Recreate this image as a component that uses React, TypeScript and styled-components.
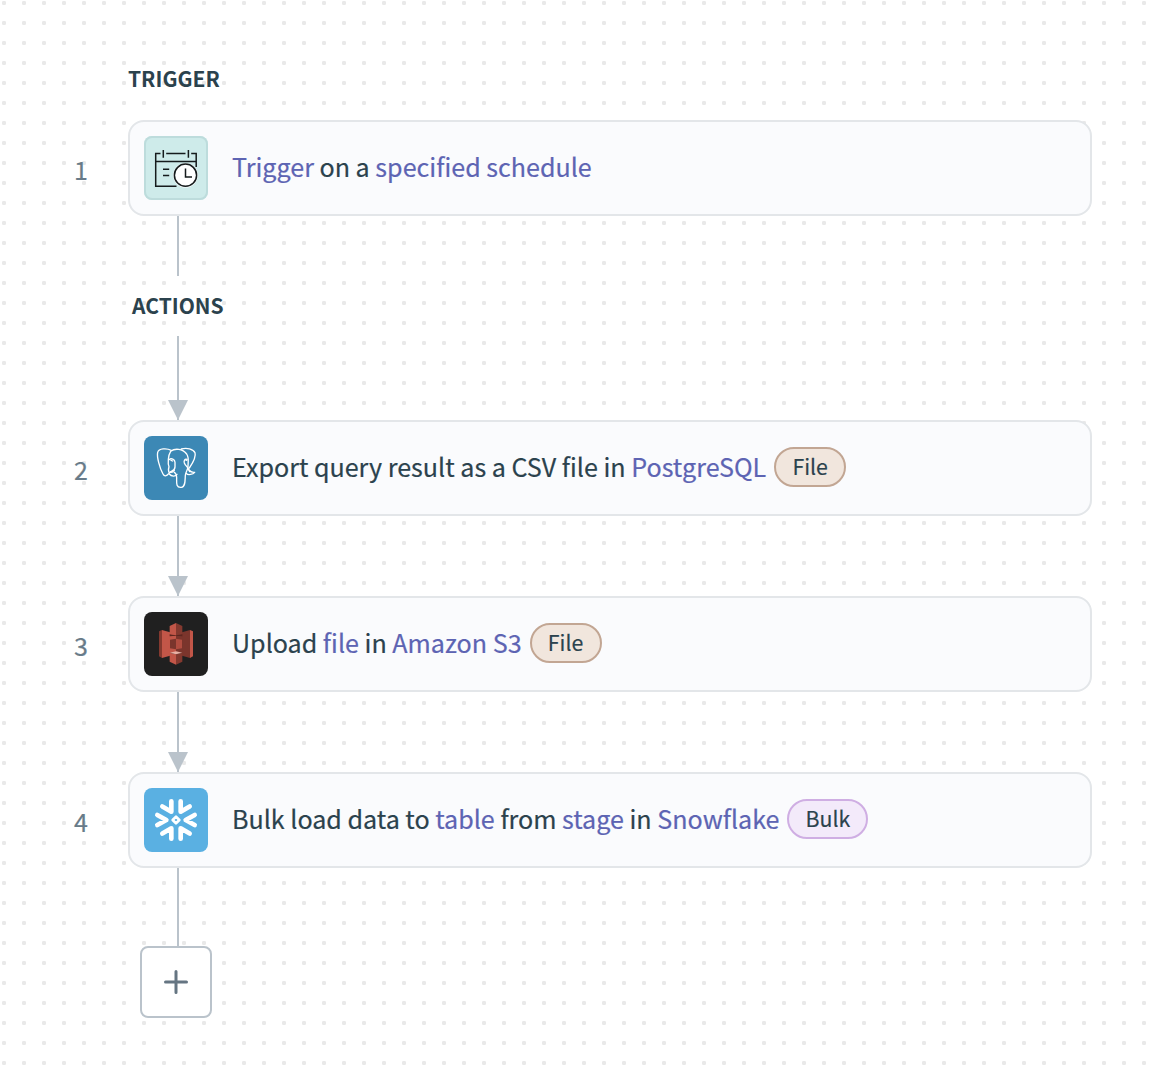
import React from 'react';
import styled, { createGlobalStyle } from 'styled-components';

const Global = createGlobalStyle`
  * { box-sizing: border-box; }
  body { margin: 0; background: #fff; }
`;

const Canvas = styled.main`
  display: flex;
  flex-direction: column;
  width: 1156px;
  height: 1072px;
  padding: 38px 64px 0 0;
  overflow: hidden;
  font-family: 'Noto Sans CJK SC', 'Noto Sans', sans-serif;
  color: #2b424d;
  background-color: #fff;
  background-image: radial-gradient(circle at 10px 10px, #e9e9e9 1.9px, transparent 2.5px);
  background-size: 20px 20px;
  background-position: 14px 13px;
`;

const Heading = styled.h2<{ $indent: number; $height: number }>`
  display: flex;
  align-items: center;
  height: ${(p) => p.$height}px;
  margin: 0 0 0 ${(p) => p.$indent}px;
  padding-bottom: 2px;
  font-size: 21px;
  font-weight: 700;
  line-height: 30px;
`;

const Step = styled.section`
  display: grid;
  grid-template-columns: 128px 1fr;
  align-items: center;
`;

const StepNumber = styled.span`
  padding: 2px 40px 0 0;
  text-align: right;
  font-size: 25px;
  line-height: 36px;
  color: #687b89;
  -webkit-text-stroke: 0.2px currentColor;
`;

const Card = styled.div`
  display: flex;
  align-items: center;
  height: 96px;
  padding: 0 14px;
  border: 2px solid #e3e6e9;
  border-radius: 16px;
  background: #fafbfd;
`;

const Tile = styled.div<{ $bg: string; $border?: string }>`
  display: flex;
  flex: none;
  width: 64px;
  height: 64px;
  margin-right: 24px;
  border-radius: 8px;
  background: ${(p) => p.$bg};
  box-shadow: inset 0 0 0 2px ${(p) => p.$border ?? 'transparent'};
`;

const Text = styled.p`
  margin: 0;
  padding-bottom: 4px;
  font-size: 25.08px;
  line-height: 36px;
  white-space: pre;
  -webkit-text-stroke: 0.2px currentColor;
`;

const Link = styled.span`
  color: #5d64b3;
`;

const Chip = styled.span<{ $bulk?: boolean }>`
  display: flex;
  justify-content: center;
  width: ${(p) => (p.$bulk ? 81 : 72)}px;
  height: 40px;
  margin: 0 0 2px 8px;
  border: 2px solid ${(p) => (p.$bulk ? '#cfaee3' : '#c2a693')};
  border-radius: 20px;
  background: ${(p) => (p.$bulk ? '#f3eafa' : '#f1e6dd')};
  font-size: 21.3px;
  line-height: 33px;
  -webkit-text-stroke: 0.15px currentColor;
`;

const Connector = styled.div<{ $height: number }>`
  display: flex;
  flex-direction: column;
  align-items: center;
  justify-content: flex-end;
  width: 20px;
  height: ${(p) => p.$height}px;
  margin-left: 168px;
  background: linear-gradient(#bac3cb, #bac3cb) center / 2px 100% no-repeat;
`;

const ArrowHead = styled.i`
  border: 10px solid transparent;
  border-top: 20px solid #bac3cb;
  border-bottom: 0;
`;

const AddButton = styled.button`
  display: flex;
  align-items: center;
  justify-content: center;
  width: 72px;
  height: 72px;
  margin-left: 140px;
  padding: 0;
  border: 2px solid #bac3cb;
  border-radius: 8px;
  background: #fff;
`;

const ScheduleIcon = () => (
  <svg width="64" height="64" viewBox="0 0 64 64" fill="none" stroke="#151b1c" strokeWidth="1.5">
    <path d="M16.5 17.6H11.7V50.3H32.5M22.2 17.6H41.5M47.2 17.6H52.2V31M11.7 25.4H52.2M19.3 14V21.8M44.4 14V21.8M19 33.3H25.2M19 39.5H25.2" />
    <circle cx="41.5" cy="39.2" r="12.3" fill="#fff" stroke="none" />
    <circle cx="41.5" cy="39.2" r="11.1" fill="#fff" />
    <path d="M41.5 32.5V41H48" />
  </svg>
);

const ElephantIcon = () => (
  <svg width="64" height="64" viewBox="0 0 192 192" fill="none" stroke="#fff" strokeWidth="4" strokeLinecap="round" strokeLinejoin="round">
    <path d="M82 43C68 36 44 37 41 49C38 62 47 97 57 114C61 122 68 121 74 113" />
    <path d="M76 110C72 105 73 99 75 92C71 83 72 58 80 46C93 36 116 38 128 54C136 66 132 77 132 91C132 102 125 107 124 118C123 132 125 153 112 154C95 156 98 139 98 125C98 116 95 111 90 108" />
    <path d="M112 39C128 34 148 39 153 50C157 63 145 83 136 96" />
    <path d="M76 71C81 65 93 70 93 79V93C93 103 84 105 80 107" />
    <path d="M129 70C122 68 119 74 121 81C124 89 130 92 133 98L137 107" />
    <path d="M76 114C82 122 96 122 99 115M76 110C84 110 88 107 91 103M127 112C132 119 147 115 152 109C145 110 139 107 135 102" />
    <path d="M81 73L86 75M126 73L129 72" />
  </svg>
);

const BucketIcon = () => (
  <svg width="64" height="64" viewBox="0 0 192 192">
    <path fill="#84392f" d="M45 58L54 54V138L45 133Z" />
    <path fill="#c25648" d="M54 54L78 61V131L54 138Z" />
    <path fill="#7b352c" d="M114 61L138 54V138L114 131Z" />
    <path fill="#c25648" d="M138 54L147 58V133L138 138Z" />
    <path fill="#c25648" d="M77 66H96V122H77Z" />
    <path fill="#7b352c" d="M96 66H115V122H96Z" />
    <path fill="#5c261f" d="M77 67L96 69L115 67V73L96 71L77 73Z" />
    <path fill="#7b352c" d="M78 83L96 80V112L78 109Z" />
    <path fill="#b14d40" d="M96 80L114 83V109L96 112Z" />
    <path fill="#c25648" d="M77 42L96 33V70L77 66Z" />
    <path fill="#84392f" d="M96 33L115 42V66L96 70Z" />
    <path fill="#c25648" d="M77 122L96 127V158L77 149Z" />
    <path fill="#84392f" d="M96 127L115 122V149L96 158Z" />
    <path fill="#e9afa3" d="M77 122L96 118L115 122L96 127Z" />
  </svg>
);

const FlakeIcon = () => (
  <svg width="64" height="64" viewBox="0 0 192 192" fill="none" stroke="#fff" strokeWidth="14" strokeLinecap="round" strokeLinejoin="round">
    <path d="M82 40V71L55 55.5M110 40V71L137 55.5" />
    <path d="M82 152V121L55 136.5M110 152V121L137 136.5" />
    <path d="M40 81L67 96L40 111M152 81L125 96L152 111" />
    <path strokeWidth="8" d="M96 86L106 96L96 106L86 96Z" />
  </svg>
);

const App = () => (
  <>
    <Global />
    <Canvas>
      <Heading $indent={128} $height={82}>TRIGGER</Heading>
      <Step>
        <StepNumber>1</StepNumber>
        <Card>
          <Tile $bg="#ceebea" $border="#bddcdc"><ScheduleIcon /></Tile>
          <Text><Link>Trigger</Link> on a <Link>specified schedule</Link></Text>
        </Card>
      </Step>
      <Connector $height={60} />
      <Heading $indent={132} $height={60}>ACTIONS</Heading>
      <Connector $height={84}><ArrowHead /></Connector>
      <Step>
        <StepNumber>2</StepNumber>
        <Card>
          <Tile $bg="#3c88b5"><ElephantIcon /></Tile>
          <Text>Export query result as a CSV file in <Link>PostgreSQL</Link></Text>
          <Chip>File</Chip>
        </Card>
      </Step>
      <Connector $height={80}><ArrowHead /></Connector>
      <Step>
        <StepNumber>3</StepNumber>
        <Card>
          <Tile $bg="#202020"><BucketIcon /></Tile>
          <Text>Upload <Link>file</Link> in <Link>Amazon S3</Link></Text>
          <Chip>File</Chip>
        </Card>
      </Step>
      <Connector $height={80}><ArrowHead /></Connector>
      <Step>
        <StepNumber>4</StepNumber>
        <Card>
          <Tile $bg="#5ab0e2"><FlakeIcon /></Tile>
          <Text>Bulk load data to <Link>table</Link> from <Link>stage</Link> in <Link>Snowflake</Link></Text>
          <Chip $bulk>Bulk</Chip>
        </Card>
      </Step>
      <Connector $height={78} />
      <AddButton aria-label="Add step">
        <svg width="24" height="24" viewBox="0 0 24 24" stroke="#657582" strokeWidth="3" strokeLinecap="round">
          <path d="M12 1.5V22.5M1.5 12H22.5" />
        </svg>
      </AddButton>
    </Canvas>
  </>
);

export default App;
